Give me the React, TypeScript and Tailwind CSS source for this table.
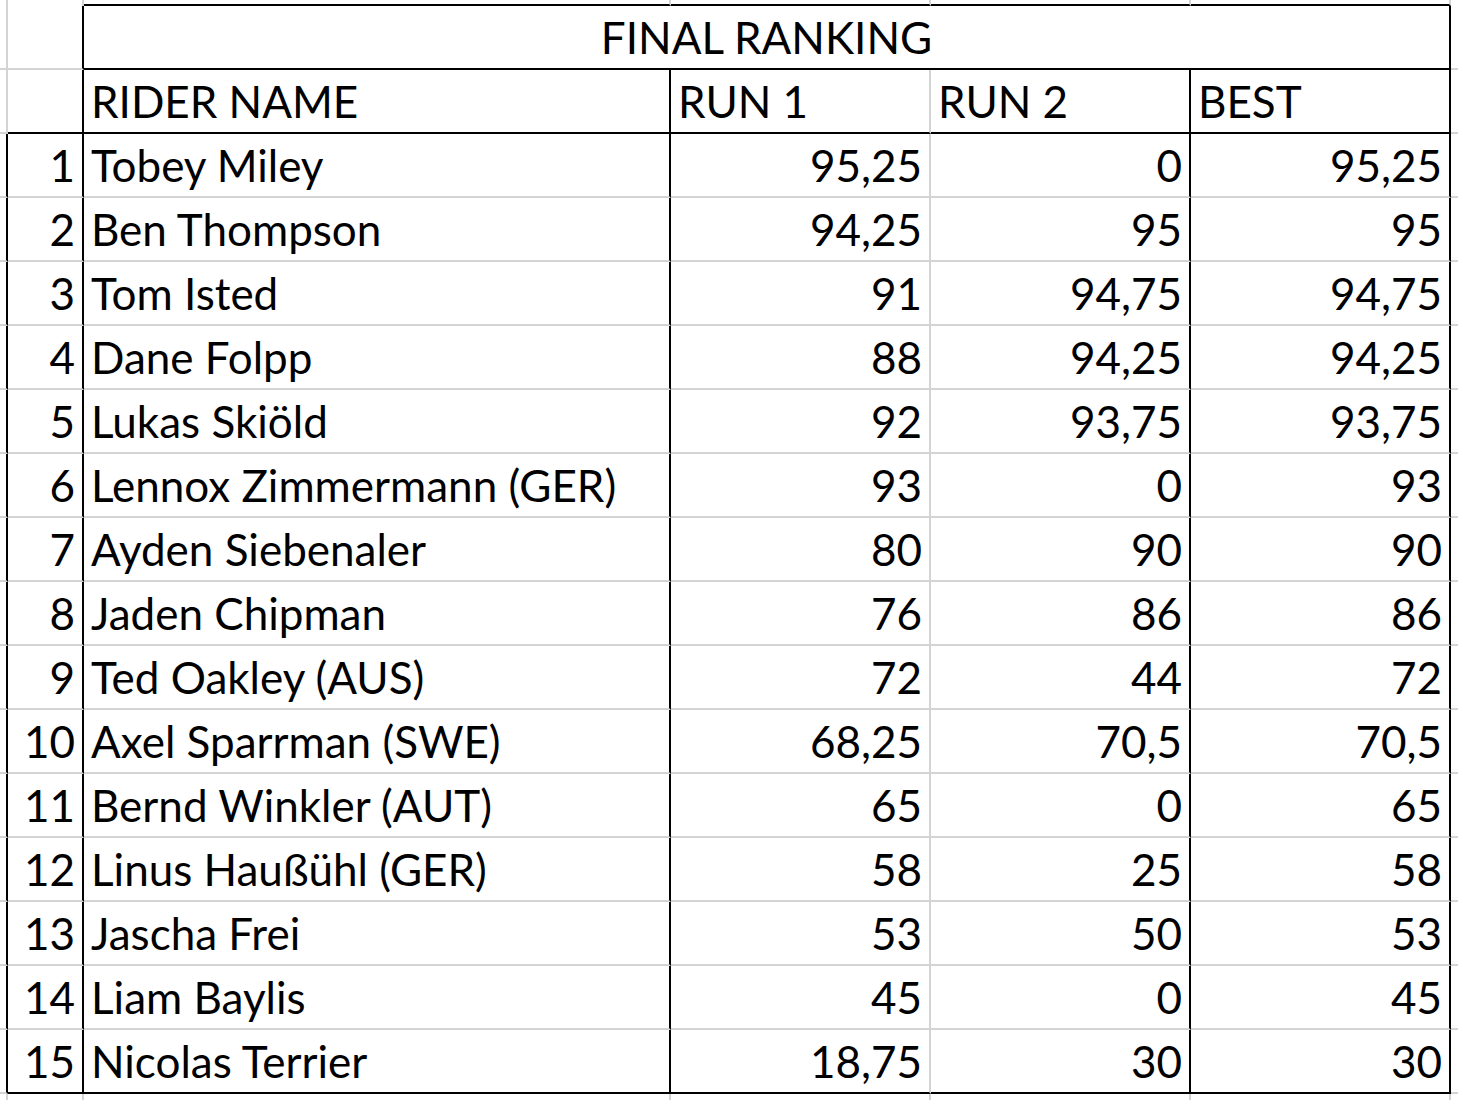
const riders: [string, string, string, string][] = [
  ["Tobey Miley", "95,25", "0", "95,25"],
  ["Ben Thompson", "94,25", "95", "95"],
  ["Tom Isted", "91", "94,75", "94,75"],
  ["Dane Folpp", "88", "94,25", "94,25"],
  ["Lukas Skiöld", "92", "93,75", "93,75"],
  ["Lennox Zimmermann (GER)", "93", "0", "93"],
  ["Ayden Siebenaler", "80", "90", "90"],
  ["Jaden Chipman", "76", "86", "86"],
  ["Ted Oakley (AUS)", "72", "44", "72"],
  ["Axel Sparrman (SWE)", "68,25", "70,5", "70,5"],
  ["Bernd Winkler (AUT)", "65", "0", "65"],
  ["Linus Haußühl (GER)", "58", "25", "58"],
  ["Jascha Frei", "53", "50", "53"],
  ["Liam Baylis", "45", "0", "45"],
  ["Nicolas Terrier", "18,75", "30", "30"],
];

const cell = "border-r-2 border-b-2 flex items-end";

export default function App() {
  return (
    <div
      className="w-[1458px] h-[1100px] bg-white text-black overflow-hidden text-[44px] leading-none"
      style={{ fontFamily: "Lato, 'Noto Sans', sans-serif" }}
    >
      <div className="grid grid-cols-[8px_76px_587px_260px_260px_260px_7px] grid-rows-[6px_64px_64px_repeat(15,64px)_10px]">
        {/* top strip */}
        <div className="border-r-2 border-[#d4d4d4]" />
        <div className="border-r-2 border-[#d4d4d4]" />
        <div className="border-r-2 border-b-2 border-r-[#d4d4d4] border-b-black" />
        <div className="border-r-2 border-b-2 border-r-[#d4d4d4] border-b-black" />
        <div className="border-r-2 border-b-2 border-r-[#d4d4d4] border-b-black" />
        <div className="border-r-2 border-b-2 border-r-[#d4d4d4] border-b-black" />
        <div />

        {/* title row */}
        <div className="border-r-2 border-b-2 border-[#d4d4d4]" />
        <div className="border-r-2 border-b-2 border-r-black border-b-[#d4d4d4]" />
        <div className={`${cell} col-span-4 border-black justify-center pb-[9px]`}>
          FINAL RANKING
        </div>
        <div className="border-b-2 border-[#d4d4d4]" />

        {/* header row */}
        <div className="border-r-2 border-b-2 border-r-[#d4d4d4] border-b-[#d4d4d4]" />
        <div className={`${cell} border-black`} />
        <div className={`${cell} border-black pl-[7px] pb-[9px]`}>RIDER NAME</div>
        <div className={`${cell} border-r-[#d4d4d4] border-b-black pl-[7px] pb-[9px]`}>RUN 1</div>
        <div className={`${cell} border-black pl-[7px] pb-[9px]`}>RUN 2</div>
        <div className={`${cell} border-black pl-[7px] pb-[9px]`}>BEST</div>
        <div className="border-b-2 border-[#d4d4d4]" />

        {/* data rows */}
        {riders.map((r, i) => {
          const last = i === riders.length - 1;
          const bottom = last ? "border-b-black" : "border-b-[#d4d4d4]";
          return [
            <div key={`a${i}`} className="border-r-2 border-b-2 border-r-black border-b-[#d4d4d4]" />,
            <div key={`n${i}`} className={`${cell} border-r-black ${bottom} justify-end pr-[7px] pb-[9px]`}>
              {i + 1}
            </div>,
            <div key={`r${i}`} className={`${cell} border-r-black ${bottom} pl-[7px] pb-[9px]`}>
              {r[0]}
            </div>,
            <div key={`x${i}`} className={`${cell} border-r-[#d4d4d4] ${bottom} justify-end pr-[7px] pb-[9px]`}>
              {r[1]}
            </div>,
            <div key={`y${i}`} className={`${cell} border-r-black ${bottom} justify-end pr-[7px] pb-[9px]`}>
              {r[2]}
            </div>,
            <div key={`z${i}`} className={`${cell} border-r-black ${bottom} justify-end pr-[7px] pb-[9px]`}>
              {r[3]}
            </div>,
            <div key={`f${i}`} className="border-b-2 border-[#d4d4d4]" />,
          ];
        })}

        {/* bottom strip */}
        <div className="border-r-2 border-[#d4d4d4]" />
        <div className="border-r-2 border-[#d4d4d4]" />
        <div className="border-r-2 border-[#d4d4d4]" />
        <div className="border-r-2 border-[#d4d4d4]" />
        <div className="border-r-2 border-[#d4d4d4]" />
        <div className="border-r-2 border-[#d4d4d4]" />
        <div />
      </div>
    </div>
  );
}
